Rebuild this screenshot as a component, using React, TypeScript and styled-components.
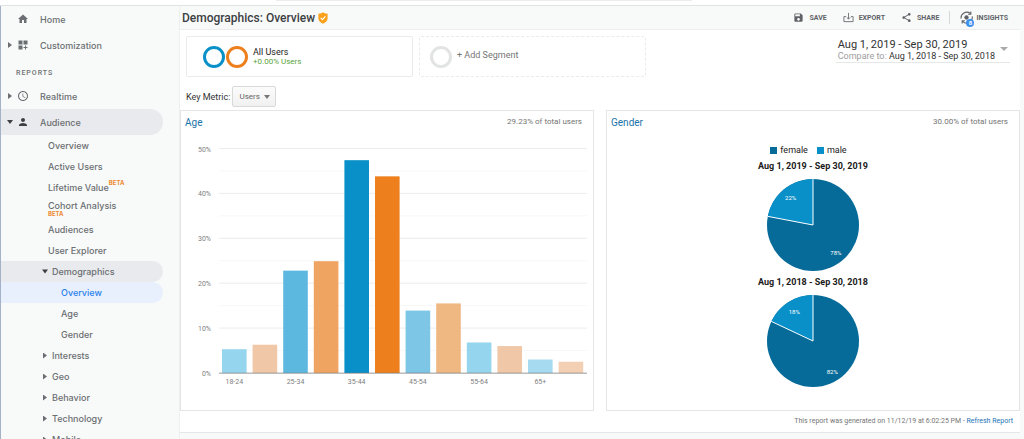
import React from 'react';
import styled, { createGlobalStyle, css } from 'styled-components';
import {
  MdAccessTime,
  MdDashboardCustomize,
  MdHome,
  MdPerson,
  MdSave,
  MdShare,
} from 'react-icons/md';

const GlobalStyle = createGlobalStyle`
  *, *::before, *::after { box-sizing: border-box; }
  body {
    margin: 0;
    background: #f8faf9;
    color: #333;
    font-family: Roboto, "Liberation Sans", sans-serif;
    font-size: 9px;
  }
  button, select { font: inherit; color: inherit; }
  a { color: inherit; text-decoration: none; }
`;

const Shell = styled.div`
  display: flex;
  flex-direction: column;
  height: 100vh;
  overflow: hidden;
`;

const TopStrip = styled.header`
  flex: none;
  height: 6px;
  padding: 0 332px 0 276px;
  background: #fff;
  border-bottom: 1px solid #e0e3e3;
`;

const SearchEdge = styled.div`
  height: 1px;
  background: #eceeee;
`;

const Body = styled.div`
  flex: 1;
  display: flex;
  min-height: 0;
`;

const Sidebar = styled.nav`
  flex: none;
  width: 180px;
  overflow: hidden;
  border-left: 1px solid #a5b1c6;
  border-right: 1px solid #eef0f0;
  font-family: Inter, Roboto, sans-serif;
  font-weight: 500;
  color: #6b6e72;
`;

const Caret = styled.span<{ $open?: boolean }>`
  flex: none;
  width: 6px;
  height: 6px;
  background: ${p => (p.$open ? '#3c4043' : '#6b6e72')};
  ${p =>
    p.$open
      ? css`clip-path: polygon(0 1px, 6px 1px, 3px 5px);`
      : css`clip-path: polygon(1px 0, 5px 3px, 1px 6px);`}
`;

const NavItem = styled.a<{ $active?: boolean }>`
  display: grid;
  grid-template-columns: 16px 23px 1fr;
  align-items: center;
  height: 26px;
  margin-right: 16px;
  border-radius: 0 13px 13px 0;
  background: ${p => (p.$active ? '#e8eaed' : 'transparent')};

  svg { width: 12px; height: 12px; fill: ${p => (p.$active ? '#3c4043' : '#6b6e72')}; }
  ${Caret} { justify-self: end; margin-right: 4px; }
`;

const SectionTitle = styled.h2`
  margin: 0;
  padding: 10px 0 5px 15px;
  font-family: Roboto, sans-serif;
  font-size: 7px;
  line-height: 10px;
  font-weight: 500;
  letter-spacing: 1px;
`;

const SubItem = styled.a<{ $level?: number; $tone?: 'open' | 'selected' }>`
  display: flex;
  align-items: center;
  height: 21px;
  margin-right: 16px;
  padding-left: ${p => (p.$level === 2 ? 60 : 47)}px;
  border-radius: 0 11px 11px 0;
  line-height: 10px;
  background: ${p =>
    p.$tone === 'open' ? '#e8eaed' : p.$tone === 'selected' ? '#e8f0fe' : 'transparent'};
  color: ${p => (p.$tone === 'selected' ? '#2b83ea' : 'inherit')};
`;

const GroupItem = styled(SubItem)`
  gap: 4px;
  padding-left: 41px;
`;

const Beta = styled.sup<{ $below?: boolean }>`
  display: ${p => (p.$below ? 'block' : 'inline')};
  align-self: flex-start;
  margin-top: ${p => (p.$below ? 0 : 3)}px;
  font-size: 6px;
  line-height: 6px;
  font-weight: 700;
  vertical-align: baseline;
  color: #ee8a35;
`;

const Main = styled.main`
  flex: 1;
  min-width: 0;
  padding-right: 4px;
`;

const TitleBar = styled.div`
  display: flex;
  align-items: center;
  height: 24px;
  padding: 0 12px 0 2px;
  border-bottom: 1px solid #eceeee;
`;

const Title = styled.h1`
  margin: 0 3px 0 0;
  font-size: 12px;
  line-height: 16px;
  font-weight: 500;
  color: #3c4043;
`;

const Actions = styled.div`
  display: flex;
  align-items: center;
  gap: 16px;
  margin-left: auto;
`;

const Action = styled.button<{ $tight?: boolean }>`
  display: flex;
  align-items: center;
  gap: ${p => (p.$tight ? 3 : 5)}px;
  padding: 0;
  border: 0;
  background: none;
  font-size: 7px;
  line-height: 12px;
  font-weight: 700;
  color: #5f6368;

  svg { width: ${p => (p.$tight ? 13 : 11)}px; height: ${p => (p.$tight ? 13 : 11)}px; }
`;

const Divider = styled.span`
  width: 1px;
  height: 13px;
  margin: 0 -6px;
  background: #d5d8d8;
`;

const InsightsMark = styled.span`
  position: relative;
  display: flex;
`;

const Count = styled.span`
  position: absolute;
  right: -1px;
  bottom: -3px;
  width: 8px;
  height: 8px;
  border-radius: 50%;
  background: #3d90ee;
  color: #fff;
  font-size: 6px;
  line-height: 8px;
  text-align: center;
`;

const Report = styled.section`
  background: #fff;
  border-bottom: 1px solid #e4e7e7;
`;

const Segments = styled.div`
  display: flex;
  align-items: flex-start;
  gap: 6px;
  padding: 6px 10px 0 6px;
`;

const Segment = styled.button<{ $empty?: boolean }>`
  display: flex;
  align-items: center;
  gap: 5px;
  flex: 0 1 227px;
  height: 41px;
  padding: 0 0 0 ${p => (p.$empty ? 10 : 16)}px;
  border: 1px ${p => (p.$empty ? 'dashed' : 'solid')} #eaecec;
  border-radius: 2px;
  background: #fff;
  text-align: left;
  line-height: 10px;
  color: ${p => (p.$empty ? '#757575' : '#222')};
`;

const SegmentName = styled.span`
  padding-bottom: 3px;
`;

const Rings = styled.span`
  display: flex;
  gap: 1px;
`;

const Ring = styled.span<{ $color: string }>`
  width: 22px;
  height: 22px;
  border: 3px solid ${p => p.$color};
  border-radius: 50%;
`;

const Change = styled.span`
  display: block;
  font-size: 8px;
  color: #5aa43c;
`;

const DateRange = styled.button`
  display: flex;
  align-items: center;
  gap: 5px;
  margin-left: auto;
  height: 27px;
  padding: 0 2px;
  border: 0;
  border-bottom: 1px solid #e6e8e8;
  background: none;
  text-align: left;
  color: #333;
`;

const Range = styled.span`
  display: block;
  font-size: 11px;
  line-height: 13px;
`;

const Compare = styled.span`
  display: block;
  font-size: 9px;
  line-height: 10px;
`;

const Muted = styled.span`
  color: #9e9e9e;
`;

const Arrow = styled.span`
  width: 0;
  height: 0;
  border: 4px solid transparent;
  border-top-color: #aaa;
  border-bottom-width: 0;
`;

const MetricRow = styled.div`
  display: flex;
  align-items: center;
  gap: 2px;
  height: 33px;
  padding: 6px 6px 0;
`;

const SelectBox = styled.span`
  display: grid;
  align-items: center;

  > * { grid-area: 1 / 1; }
  ${Arrow} {
    justify-self: end;
    margin-right: 6px;
    border-width: 4px 3px 0;
    border-top-color: #777;
    pointer-events: none;
  }
`;

const Select = styled.select`
  appearance: none;
  width: 44px;
  height: 21px;
  padding: 0 6px;
  border: 1px solid #d8dada;
  border-radius: 2px;
  background: linear-gradient(#fbfbfb, #f1f1f1);
  font-size: 8px;
  color: #666;
`;

const Panels = styled.div`
  display: grid;
  grid-template-columns: 1fr 1fr;
  gap: 12px;
`;

const Panel = styled.article`
  height: 301px;
  border: 1px solid #e4e6e6;
`;

const PanelHead = styled.div`
  display: flex;
  justify-content: space-between;
  height: 20px;
  padding: 5px 11px 0 4px;
`;

const PanelTitle = styled.a`
  font-size: 10px;
  line-height: 14px;
  color: #1a73a8;
`;

const Share = styled.span`
  font-size: 8px;
  line-height: 12px;
  color: #757575;
`;

const Chart = styled.svg`
  display: block;
  width: 100%;
  height: auto;
  font-family: Roboto, sans-serif;
`;

const Legend = styled.div`
  display: flex;
  justify-content: center;
  gap: 9px;
  padding: 13px 9px 0 0;
  font-size: 9px;
  line-height: 12px;
  color: #222;
`;

const Key = styled.span<{ $color: string }>`
  display: flex;
  align-items: center;
  gap: 3px;

  &::before {
    content: "";
    width: 7px;
    height: 7px;
    background: ${p => p.$color};
  }
`;

const PieTitle = styled.h3`
  margin: 0;
  padding-top: 3px;
  font-size: 9px;
  line-height: 14px;
  font-weight: 700;
  text-align: center;
  color: #1a1a1a;
`;

const Pie = styled.svg`
  display: block;
  width: 94px;
  height: 94px;
  margin: 5px auto 0;
  font-family: Roboto, sans-serif;
`;

const Footer = styled.footer`
  padding: 4px 7px 5px;
  font-size: 7px;
  line-height: 12px;
  text-align: right;
  color: #757575;

  a { color: #1a73b5; }
`;

const FEMALE = '#066b99';
const MALE = '#0a90c9';

const ages = [
  { label: '18-24', now: 5.3, before: 6.3, blue: '#96d5ee', orange: '#f1c8a7' },
  { label: '25-34', now: 22.8, before: 24.9, blue: '#5db8e0', orange: '#f0a461' },
  { label: '35-44', now: 47.4, before: 43.8, blue: '#0a90c9', orange: '#ed7f1c' },
  { label: '45-54', now: 13.9, before: 15.5, blue: '#7dc6e6', orange: '#efb782' },
  { label: '55-64', now: 6.8, before: 6, blue: '#96d5ee', orange: '#f1c8a7' },
  { label: '65+', now: 3, before: 2.5, blue: '#a5daf1', orange: '#f3cfb4' },
];

function AgeChart() {
  const base = 242;
  const unit = 4.49;
  return (
    <Chart viewBox="0 0 412 278" role="img" aria-label="Users by age">
      {[5, 10, 15, 20, 25, 30, 35, 40, 45, 50].map(v => (
        <line key={v} x1="38" x2="406" y1={base - v * unit} y2={base - v * unit}
          stroke={v % 10 ? '#f7f7f7' : '#ececec'} />
      ))}
      {[0, 10, 20, 30, 40, 50].map(v => (
        <text key={v} x="30" y={base - v * unit + 3} textAnchor="end" fontSize="7" fill="#808080">
          {v}%
        </text>
      ))}
      {ages.map((a, i) => {
        const x = 41 + i * 61.2;
        return (
          <g key={a.label}>
            <rect x={x} y={base - a.now * unit} width="24.6" height={a.now * unit} fill={a.blue} />
            <rect x={x + 30.6} y={base - a.before * unit} width="24.6" height={a.before * unit} fill={a.orange} />
            <text x={x + 12.3} y="253" textAnchor="middle" fontSize="7" fill="#808080">{a.label}</text>
          </g>
        );
      })}
      <line x1="38" x2="406" y1={base + 0.3} y2={base + 0.3} stroke="#777" strokeOpacity=".5" strokeWidth="1.4" />
    </Chart>
  );
}

function GenderPie({ female, male }: { female: number; male: number }) {
  const turn = (female / 100) * 2 * Math.PI;
  const ex = 47 + 46 * Math.sin(turn);
  const ey = 47 - 46 * Math.cos(turn);
  const at = (angle: number, r: number) => ({ x: 47 + r * Math.sin(angle), y: 49.3 - r * Math.cos(angle) });
  return (
    <Pie viewBox="0 0 94 94" role="img" aria-label={`${female}% female, ${male}% male`}>
      <circle cx="47" cy="47" r="46" fill={FEMALE} />
      <path d={`M47 47L${ex} ${ey}A46 46 0 0 1 47 1Z`} fill={MALE} />
      <path d={`M47 1V47L${ex} ${ey}`} fill="none" stroke="#fff" strokeWidth="1" />
      <g fill="#fff" fontSize="6" textAnchor="middle">
        <text {...at(turn / 2, 36)}>{female}%</text>
        <text {...at(turn + (2 * Math.PI - turn) / 2, 35)}>{male}%</text>
      </g>
    </Pie>
  );
}

function ShieldIcon() {
  return (
    <svg width="10" height="12" viewBox="0 0 10 12" aria-hidden="true">
      <path d="M5 .3Q6 1.500 9.600 1.800V6.600C9.600 9.200 7.500 10.600 5 11.700C2.500 10.600.4 9.200.4 6.600V1.800Q4 1.500 5 .3Z" fill="#f9a11b" />
      <path d="M2.700 5.900l1.700 1.700 3-3.200" fill="none" stroke="#fff" strokeWidth="1.100" />
    </svg>
  );
}

function ExportIcon() {
  return (
    <svg viewBox="0 0 24 24" fill="none" stroke="#6b6f73" strokeWidth="2" aria-hidden="true">
      <path d="M6.500 10H2v11h20V10h-4.500" />
      <path d="M12 2v13M8 11.500l4 4 4-4" />
    </svg>
  );
}

function InsightsIcon() {
  return (
    <svg viewBox="0 0 24 24" fill="none" stroke="#5f6368" strokeWidth="2" aria-hidden="true">
      <path d="M2 14A10.500 10.500 0 0 1 19 4.500M20 1v5h-5" />
      <path d="M22.500 10A10.500 10.500 0 0 1 5 19.500M4 23v-5h5" />
      <circle cx="12" cy="12" r="4" fill="#5f6368" stroke="none" />
    </svg>
  );
}

export default function App() {
  return (
    <>
      <GlobalStyle />
      <Shell>
        <TopStrip><SearchEdge /></TopStrip>
        <Body>
          <Sidebar aria-label="Reports navigation">
            <NavItem href="#home"><span /><MdHome />Home</NavItem>
            <NavItem href="#customization"><Caret /><MdDashboardCustomize />Customization</NavItem>
            <SectionTitle>REPORTS</SectionTitle>
            <NavItem href="#realtime"><Caret /><MdAccessTime />Realtime</NavItem>
            <NavItem href="#audience" $active><Caret $open /><MdPerson />Audience</NavItem>
            <SubItem href="#overview">Overview</SubItem>
            <SubItem href="#active">Active Users</SubItem>
            <SubItem href="#lifetime">Lifetime Value<Beta>BETA</Beta></SubItem>
            <SubItem href="#cohort"><span>Cohort Analysis<Beta $below>BETA</Beta></span></SubItem>
            <SubItem href="#audiences">Audiences</SubItem>
            <SubItem href="#explorer">User Explorer</SubItem>
            <GroupItem href="#demographics" $tone="open"><Caret $open />Demographics</GroupItem>
            <SubItem href="#demo-overview" $level={2} $tone="selected">Overview</SubItem>
            <SubItem href="#age" $level={2}>Age</SubItem>
            <SubItem href="#gender" $level={2}>Gender</SubItem>
            {['Interests', 'Geo', 'Behavior', 'Technology', 'Mobile'].map(name => (
              <GroupItem key={name} href={`#${name}`}><Caret />{name}</GroupItem>
            ))}
          </Sidebar>
          <Main>
            <TitleBar>
              <Title>Demographics: Overview</Title>
              <ShieldIcon />
              <Actions>
                <Action><MdSave />SAVE</Action>
                <Action><ExportIcon />EXPORT</Action>
                <Action><MdShare />SHARE</Action>
                <Divider />
                <Action $tight><InsightsMark><InsightsIcon /><Count>8</Count></InsightsMark>INSIGHTS</Action>
              </Actions>
            </TitleBar>
            <Report>
              <Segments>
                <Segment>
                  <Rings><Ring $color="#0a90c9" /><Ring $color="#ed7f1c" /></Rings>
                  <span>All Users<Change>+0.00% Users</Change></span>
                </Segment>
                <Segment $empty><Ring $color="#e2e3e3" /><SegmentName>+ Add Segment</SegmentName></Segment>
                <DateRange>
                  <span>
                    <Range>Aug 1, 2019 - Sep 30, 2019</Range>
                    <Compare><Muted>Compare to: </Muted>Aug 1, 2018 - Sep 30, 2018</Compare>
                  </span>
                  <Arrow />
                </DateRange>
              </Segments>
              <MetricRow>
                <label htmlFor="metric">Key Metric:</label>
                <SelectBox>
                  <Select id="metric" defaultValue="Users"><option>Users</option></Select>
                  <Arrow />
                </SelectBox>
              </MetricRow>
              <Panels>
                <Panel>
                  <PanelHead><PanelTitle href="#age">Age</PanelTitle><Share>29.23% of total users</Share></PanelHead>
                  <AgeChart />
                </Panel>
                <Panel>
                  <PanelHead><PanelTitle href="#gender">Gender</PanelTitle><Share>30.00% of total users</Share></PanelHead>
                  <Legend><Key $color={FEMALE}>female</Key><Key $color={MALE}>male</Key></Legend>
                  <PieTitle>Aug 1, 2019 - Sep 30, 2019</PieTitle>
                  <GenderPie female={78} male={22} />
                  <PieTitle>Aug 1, 2018 - Sep 30, 2018</PieTitle>
                  <GenderPie female={82} male={18} />
                </Panel>
              </Panels>
              <Footer>
                This report was generated on 11/12/19 at 6:02:25 PM - <a href="#refresh">Refresh Report</a>
              </Footer>
            </Report>
          </Main>
        </Body>
      </Shell>
    </>
  );
}
